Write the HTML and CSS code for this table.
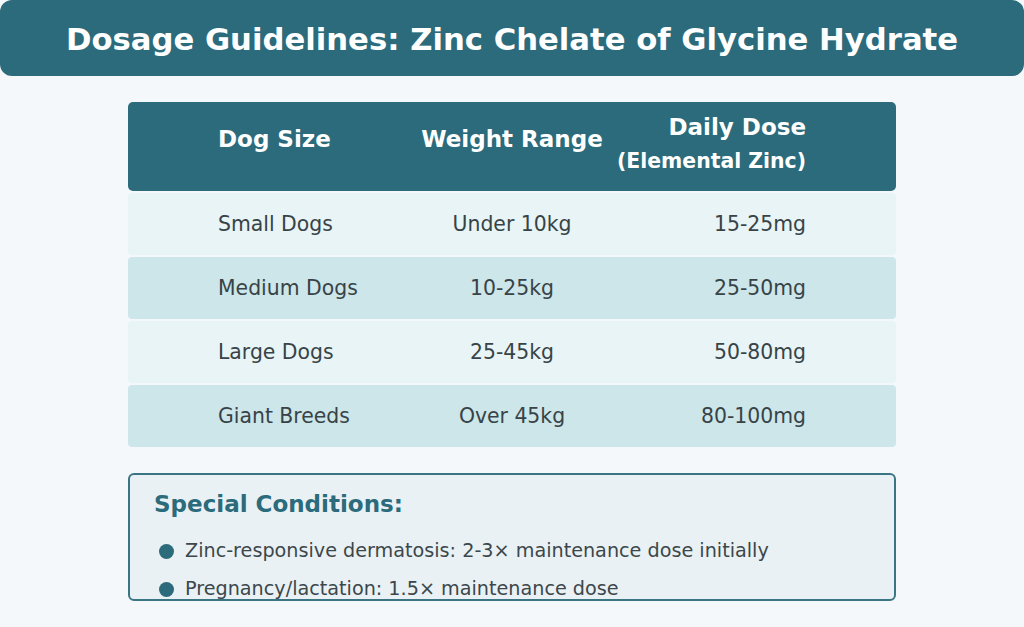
FILE: index.html
```html
<!DOCTYPE html>
<html>
<head>
<meta charset="utf-8">
<link rel="stylesheet" href="styles.css">
</head>
<body>
<header class="title-bar"><h1>Dosage Guidelines: Zinc Chelate of Glycine Hydrate</h1></header>
<main class="content">
  <div class="table">
    <div class="row head">
      <div class="cell c1">Dog Size</div>
      <div class="cell c2">Weight Range</div>
      <div class="cell c3"><span class="l1">Daily Dose</span><span class="l2">(Elemental Zinc)</span></div>
    </div>
    <div class="row light">
      <div class="cell c1">Small Dogs</div>
      <div class="cell c2">Under 10kg</div>
      <div class="cell c3">15-25mg</div>
    </div>
    <div class="row dark">
      <div class="cell c1">Medium Dogs</div>
      <div class="cell c2">10-25kg</div>
      <div class="cell c3">25-50mg</div>
    </div>
    <div class="row light">
      <div class="cell c1">Large Dogs</div>
      <div class="cell c2">25-45kg</div>
      <div class="cell c3">50-80mg</div>
    </div>
    <div class="row dark">
      <div class="cell c1">Giant Breeds</div>
      <div class="cell c2">Over 45kg</div>
      <div class="cell c3">80-100mg</div>
    </div>
  </div>
  <section class="special">
    <h2>Special Conditions:</h2>
    <ul>
      <li>Zinc-responsive dermatosis: 2-3× maintenance dose initially</li>
      <li>Pregnancy/lactation: 1.5× maintenance dose</li>
    </ul>
  </section>
</main>
</body>
</html>
```

FILE: styles.css
```css
* { box-sizing: border-box; }
html, body { margin: 0; padding: 0; }
body {
  width: 1024px;
  height: 627px;
  overflow: hidden;
  background: #f5f8fa;
  font-family: "DejaVu Sans", sans-serif;
  color: #374347;
}
.title-bar {
  height: 76px;
  background: #2b6b7b;
  border-radius: 12px;
  display: flex;
  align-items: center;
  justify-content: center;
  padding-top: 4px;
}
.title-bar h1 {
  margin: 0;
  color: #fff;
  font-size: 30.7px;
  font-weight: bold;
  line-height: 36px;
  white-space: nowrap;
}
.content {
  width: 768px;
  margin: 26px auto 0;
}
.table {
  display: flex;
  flex-direction: column;
  gap: 2px;
}
.row {
  display: grid;
  grid-template-columns: 256px 256px 256px;
  align-items: center;
  height: 62px;
  border-radius: 4px;
  font-size: 20.4px;
  white-space: nowrap;
}
.row.head {
  height: 89px;
  align-items: start;
  padding-top: 23px;
  background: #2b6b7b;
  color: #fff;
  font-weight: bold;
  font-size: 23px;
  line-height: 28px;
  border-radius: 5px;
}
.row.light { background: #e8f4f5; }
.row.dark { background: #cde6ea; }
.cell.c1 { padding-left: 90px; }
.cell.c2 { text-align: center; }
.cell.c3 { text-align: right; padding-right: 90px; }
.head .c3 {
  display: flex;
  flex-direction: column;
  align-items: flex-end;
  margin-top: -12px;
}
.head .c3 .l1 { line-height: 28px; margin-bottom: 8px; }
.head .c3 .l2 { font-size: 20.4px; line-height: 24px; }
.special {
  margin-top: 26px;
  height: 128px;
  border: 2px solid #3a7584;
  border-radius: 6px;
  background: #e9f1f4;
  padding: 14px 24px 0 24px;
}
.special h2 {
  margin: 0;
  font-size: 23px;
  font-weight: bold;
  color: #2b6b7b;
  line-height: 30px;
}
.special ul {
  list-style: none;
  margin: 20px 0 0 0;
  padding: 0;
}
.special li {
  display: flex;
  align-items: center;
  font-size: 19.2px;
  line-height: 24px;
  margin-bottom: 14px;
  color: #3c474b;
}
.special li::before {
  content: "";
  width: 15px;
  height: 15px;
  border-radius: 50%;
  background: #2b6b7b;
  margin: 0 11px 0 5px;
  flex: none;
}
```
